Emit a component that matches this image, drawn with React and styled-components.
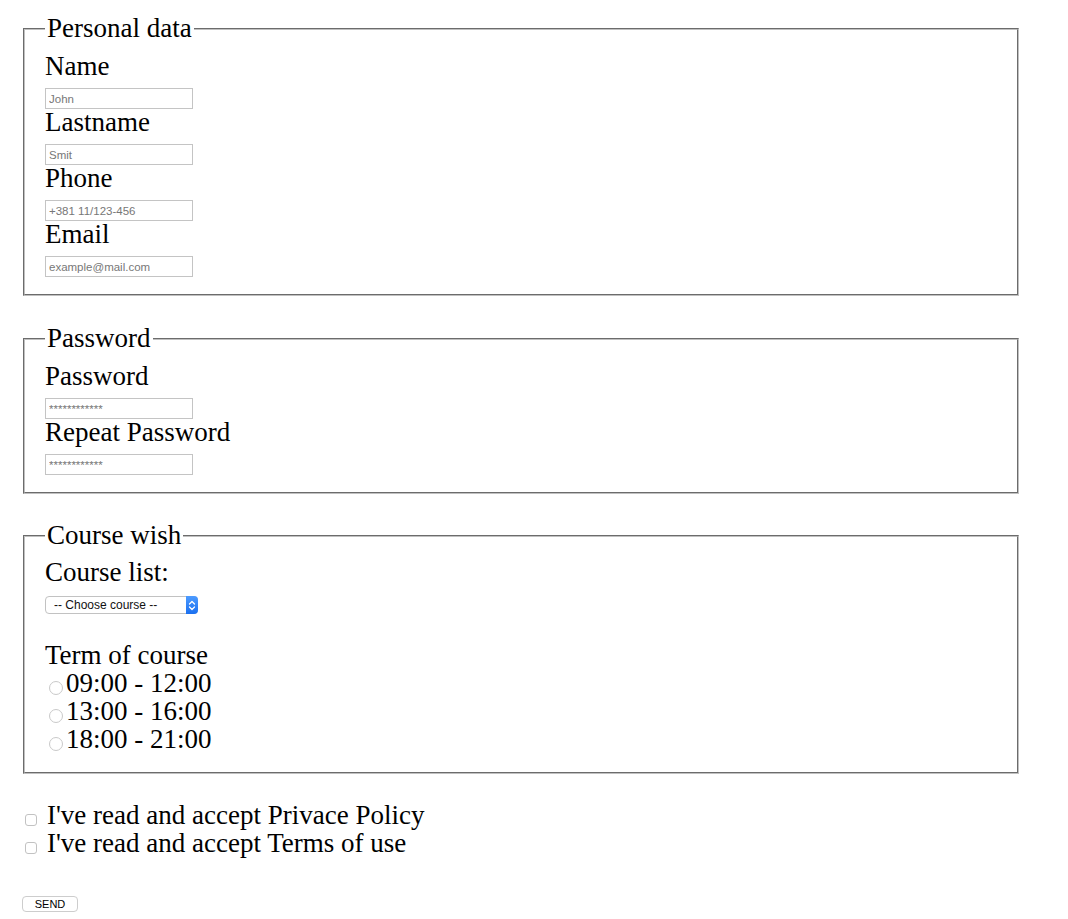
import React from "react";
import styled, { createGlobalStyle } from "styled-components";

const GlobalStyle = createGlobalStyle`
  html, body { margin: 0; padding: 0; background: #ffffff; }
  body {
    font-family: "Liberation Serif", "Times New Roman", serif;
    color: #000000;
  }
  * { box-sizing: border-box; }
`;

const Page = styled.form`
  width: 1020px;
  padding: 15px 0 20px 21px;
`;

const Fieldset = styled.fieldset`
  margin: 0 2px ${(p) => p.$gap}px;
  width: 996px;
  border: 2px groove rgb(192, 192, 192);
  padding: ${(p) => p.$top}px 20px ${(p) => p.$bottom}px;
  min-width: 0;
`;

const Legend = styled.legend`
  padding: 0 2px;
  font-size: 27px;
  line-height: 27px;
`;

const Label = styled.label`
  display: block;
  font-size: 27px;
  line-height: 27px;
`;

const TextInput = styled.input`
  display: block;
  width: 148px;
  height: 21px;
  margin: 8px 0 0;
  padding: 1px 3px;
  border: 1px solid #c4c4c4;
  border-radius: 0;
  background: #ffffff;
  font-family: "Liberation Sans", Arial, sans-serif;
  font-size: 11.5px;
  color: #000;
  outline: none;
  &::placeholder { color: #777777; }
`;

const SelectWrap = styled.div`
  position: relative;
  width: 153px;
  height: 18px;
  margin-top: 10px;
`;

const Select = styled.select`
  appearance: none;
  -webkit-appearance: none;
  display: block;
  width: 100%;
  height: 100%;
  margin: 0;
  padding: 0 14px 0 8px;
  border: 1px solid #c2c2c2;
  border-radius: 4px;
  background: #ffffff;
  font-family: "Liberation Sans", Arial, sans-serif;
  font-size: 12px;
  line-height: 16px;
  color: #111;
  outline: none;
`;

const Stepper = styled.span`
  position: absolute;
  top: 0;
  right: 0;
  width: 12px;
  height: 18px;
  border-radius: 0 4px 4px 0;
  background: linear-gradient(#4d9bff, #1a70f0);
  display: flex;
  align-items: center;
  justify-content: center;
  pointer-events: none;
`;

const Term = styled.div`
  font-size: 27px;
  line-height: 27px;
  margin-top: 28px;
`;

const RadioList = styled.div`
  margin-top: 0;
`;

const RadioRow = styled.label`
  display: block;
  font-size: 27px;
  line-height: 28px;
`;

const Radio = styled.input`
  appearance: none;
  -webkit-appearance: none;
  display: inline-block;
  width: 14px;
  height: 14px;
  margin: 0 3px 0 4px;
  vertical-align: -3px;
  border: 1.5px solid #c9c9c9;
  border-radius: 50%;
  background: #ffffff;
`;

const Checks = styled.div`
  margin-top: -1px;
`;

const CheckRow = styled.label`
  display: block;
  font-size: 27px;
  line-height: 28px;
`;

const Checkbox = styled.input`
  appearance: none;
  -webkit-appearance: none;
  display: inline-block;
  width: 12px;
  height: 12px;
  margin: 0 10px 0 4px;
  vertical-align: -2px;
  border: 1px solid #c2c2c2;
  border-radius: 3px;
  background: #ffffff;
`;

const SendButton = styled.button`
  display: block;
  margin: 39px 0 0 1px;
  width: 56px;
  height: 16px;
  padding: 0;
  border: 1px solid #cdcdcd;
  border-radius: 4px;
  background: #ffffff;
  font-family: "Liberation Sans", Arial, sans-serif;
  font-size: 11px;
  line-height: 14px;
  color: #000;
`;

function Field({ label, placeholder, type = "text" }) {
  return (
    <>
      <Label>{label}</Label>
      <TextInput type={type} placeholder={placeholder} />
    </>
  );
}

export default function App() {
  return (
    <>
      <GlobalStyle />
      <Page onSubmit={(e) => e.preventDefault()}>
        <Fieldset $gap={29} $top={11} $bottom={17}>
          <Legend>Personal data</Legend>
          <Field label="Name" placeholder="John" />
          <Field label="Lastname" placeholder="Smit" />
          <Field label="Phone" placeholder="+381 11/123-456" />
          <Field label="Email" placeholder="example@mail.com" />
        </Fieldset>

        <Fieldset $gap={28} $top={11} $bottom={17}>
          <Legend>Password</Legend>
          <Field label="Password" placeholder="************" />
          <Field label="Repeat Password" placeholder="************" />
        </Fieldset>

        <Fieldset $gap={28} $top={10} $bottom={19}>
          <Legend>Course wish</Legend>
          <Label>Course list:</Label>
          <SelectWrap>
            <Select defaultValue="">
              <option value="">-- Choose course --</option>
            </Select>
            <Stepper>
              <svg width="8" height="11" viewBox="0 0 8 11" fill="none">
                <path d="M1.5 4 L4 1.5 L6.5 4" stroke="#ffffff" strokeWidth="1.3" strokeLinecap="round" strokeLinejoin="round" />
                <path d="M1.5 7 L4 9.5 L6.5 7" stroke="#ffffff" strokeWidth="1.3" strokeLinecap="round" strokeLinejoin="round" />
              </svg>
            </Stepper>
          </SelectWrap>
          <Term>Term of course</Term>
          <RadioList>
            {["09:00 - 12:00", "13:00 - 16:00", "18:00 - 21:00"].map((t) => (
              <RadioRow key={t}>
                <Radio type="radio" name="term" />
                {t}
              </RadioRow>
            ))}
          </RadioList>
        </Fieldset>

        <Checks>
          <CheckRow>
            <Checkbox type="checkbox" />
            I've read and accept Privace Policy
          </CheckRow>
          <CheckRow>
            <Checkbox type="checkbox" />
            I've read and accept Terms of use
          </CheckRow>
        </Checks>

        <SendButton type="submit">SEND</SendButton>
      </Page>
    </>
  );
}
